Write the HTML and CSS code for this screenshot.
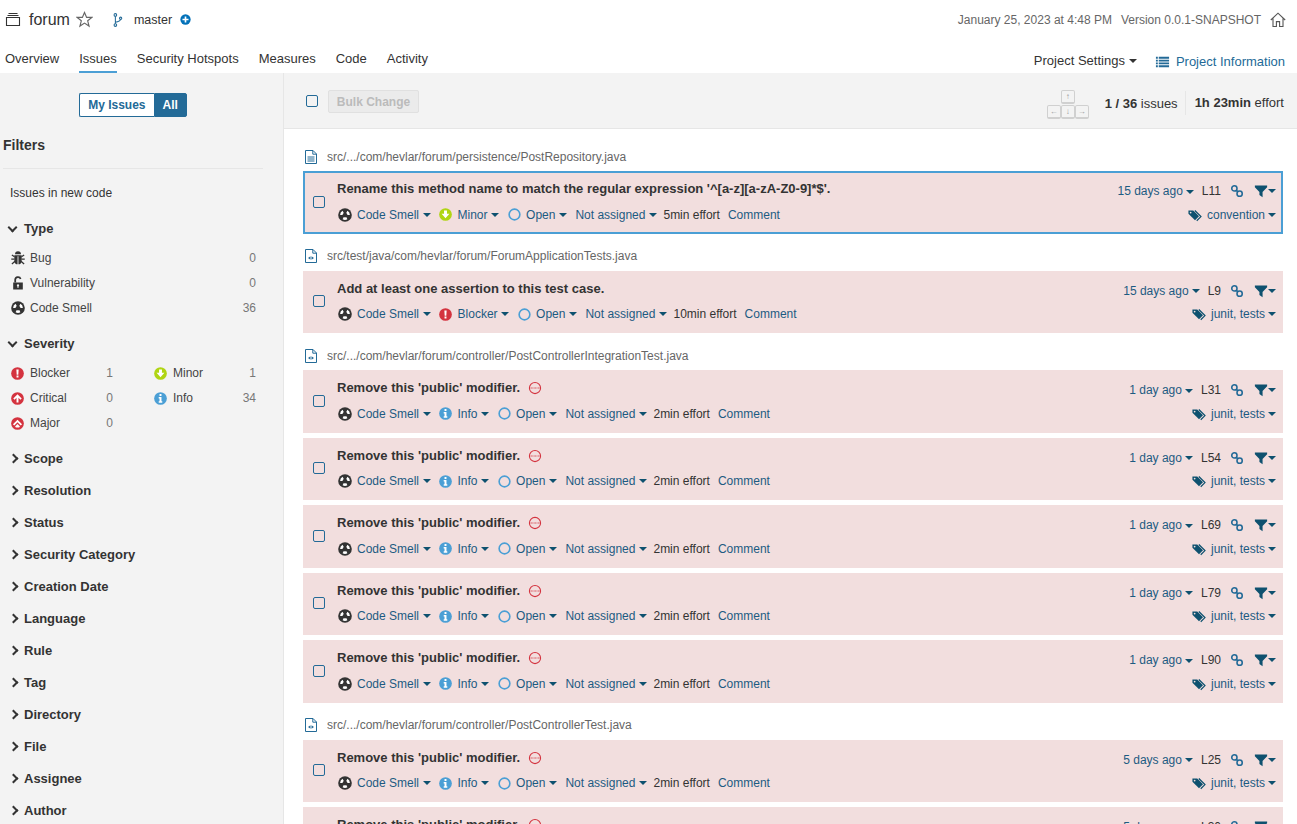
FILE: index.html
```html
<!DOCTYPE html>
<html lang="en">
<head>
    <meta charset="UTF-8">
    <meta name="viewport" content="width=device-width, initial-scale=1.0">
    <title>forum - Issues</title>
    <link rel="stylesheet" href="styles.css">
</head>
<body>
    <svg class="icon-defs" aria-hidden="true">
        <symbol id="i-smell" viewBox="0 0 16 16">
            <circle cx="8" cy="8" r="7.8" fill="#333"/>
            <path fill="#fff" d="M9.4 10.42L10.8 12.85A5.6 5.6 0 0 1 5.2 12.85L6.6 10.42A2.8 2.8 0 0 0 9.4 10.42ZM9.4 5.58L10.8 3.15A5.6 5.6 0 0 1 13.6 8L10.8 8A2.8 2.8 0 0 0 9.4 5.58ZM5.2 8L2.4 8A5.6 5.6 0 0 1 5.2 3.15L6.6 5.58A2.8 2.8 0 0 0 5.2 8Z"/>
        </symbol>
        <symbol id="i-bug" viewBox="0 0 16 16">
            <path fill="#333" d="M4.6 3.8A3.4 3.4 0 0 1 11.4 3.8ZM3.8 4.8H12.2V11A4.2 4.2 0 0 1 3.8 11ZM7.5 6V15H8.5V6Z" fill-rule="evenodd"/>
            <path fill="none" stroke="#333" stroke-width="1.5" d="M1 4.6L4 6.6M15 4.6L12 6.6M.3 9.3H4M15.7 9.3H12M1 14.8L4.6 11.8M15 14.8L11.4 11.8"/>
        </symbol>
        <symbol id="i-lock" viewBox="0 0 16 16">
            <path fill="#333" d="M2.5 7.4H13.5V15.5H2.5ZM8 9.4A1.3 1.3 0 0 0 7.3 11.8V13.4H8.7V11.8A1.3 1.3 0 0 0 8 9.4Z" fill-rule="evenodd"/>
            <path fill="none" stroke="#333" stroke-width="2" d="M4.8 7.5V4.2A3.2 3.2 0 0 1 11 3.4"/>
        </symbol>
        <symbol id="i-blocker" viewBox="0 0 16 16">
            <circle cx="8" cy="8" r="7.8" fill="#d4333f"/>
            <path fill="#fff" d="M6.6 3H9.4L9 9.6H7ZM6.8 10.6H9.2V13H6.8Z"/>
        </symbol>
        <symbol id="i-critical" viewBox="0 0 16 16">
            <circle cx="8" cy="8" r="7.8" fill="#d4333f"/>
            <path fill="#fff" d="M8 2.8L13.2 8L11.6 9.6L9.2 7.2V13H6.8V7.2L4.4 9.6L2.8 8Z"/>
        </symbol>
        <symbol id="i-major" viewBox="0 0 16 16">
            <circle cx="8" cy="8" r="7.8" fill="#d4333f"/>
            <path fill="#fff" d="M8 3.4L13.6 9L12 10.6L8 6.6L4 10.6L2.4 9ZM8 8.6L11 11.6L10 12.8H6L5 11.6Z"/>
        </symbol>
        <symbol id="i-minor" viewBox="0 0 16 16">
            <circle cx="8" cy="8" r="7.8" fill="#b0d513"/>
            <path fill="#fff" d="M6.2 3H9.8V7H12.8L8 12.6L3.2 7H6.2Z"/>
        </symbol>
        <symbol id="i-info" viewBox="0 0 16 16">
            <circle cx="8" cy="8" r="7.8" fill="#4b9fd5"/>
            <path fill="#fff" d="M6.8 2.6H9.2V4.9H6.8ZM5.8 6.2H9.2V11.4H10.2V13.2H5.8V11.4H6.8V8H5.8Z"/>
        </symbol>
        <symbol id="i-open" viewBox="0 0 16 16">
            <circle cx="8" cy="8" r="6.6" fill="none" stroke="#4b9fd5" stroke-width="2"/>
        </symbol>
        <symbol id="i-link" viewBox="0 0 16 16">
            <g fill="none" stroke="#236a97" stroke-width="1.8">
                <circle cx="5" cy="5" r="3"/>
                <circle cx="11" cy="11" r="3"/>
                <path d="M7 7L9 9"/>
            </g>
        </symbol>
        <symbol id="i-filter" viewBox="0 0 16 16">
            <path fill="#0e516f" d="M1 1.6H15V3.6L9.8 9V15.2L6.2 12.6V9L1 3.6Z"/>
        </symbol>
        <symbol id="i-tags" viewBox="0 0 16 16">
            <path fill="#0e516f" d="M.5 2.8H6L12.6 9.4L8 14L.5 6.6Z"/>
            <path fill="none" stroke="#0e516f" stroke-width="1.4" d="M7.8 2.8L14.8 9.8L10 14.6"/>
            <circle cx="3" cy="5.2" r="1" fill="#f2dede"/>
        </symbol>
        <symbol id="i-deprecated" viewBox="0 0 16 16">
            <circle cx="8" cy="8" r="6.4" fill="none" stroke="#d4333f" stroke-width="1.2"/>
            <path fill="none" stroke="#d4333f" stroke-width="1" stroke-dasharray="1 .6" d="M1.8 8H14.2"/>
        </symbol>
        <symbol id="i-file" viewBox="0 0 14 14">
            <path fill="none" stroke="#236a97" stroke-width="1" d="M1.5 .5H9L12.5 4V13.5H1.5ZM8.8 .5V4.2H12.5"/>
            <path fill="none" stroke="#236a97" stroke-width="1" d="M3.5 7H10.5M3.5 9H10.5M3.5 11H10.5"/>
        </symbol>
        <symbol id="i-test" viewBox="0 0 14 14">
            <path fill="none" stroke="#236a97" stroke-width="1" d="M1.5 .5H9L12.5 4V13.5H1.5ZM8.8 .5V4.2H12.5"/>
            <path fill="#236a97" d="M6.5 7.2V10.8L4 9ZM7.5 7.2V10.8L10 9Z"/>
        </symbol>
    </svg>

    <header class="topbar">
        <div class="project-row">
            <div class="project-left">
                <svg class="project-icon" viewBox="0 0 16 16"><path fill="none" stroke="#333" stroke-width="1.1" d="M1.5 5.5H14.5V13.5H1.5ZM2.5 3.5H13.5M3.5 1.5H12.5"/></svg>
                <span class="project-name">forum</span>
                <svg class="star-icon" viewBox="0 0 16 16"><path fill="none" stroke="#666" stroke-width="1.1" d="M8 1.4L10 6H14.9L11 9.2L12.3 14.2L8 11.4L3.7 14.2L5 9.2L1.1 6H6Z"/></svg>
                <svg class="branch-icon" viewBox="0 0 16 16"><g fill="none" stroke="#236a97" stroke-width="1.2"><circle cx="5" cy="2.2" r="1.5"/><circle cx="5" cy="13.8" r="1.5"/><circle cx="11" cy="6" r="1.3"/><path d="M5 3.7V12.3M5 10.5C8 10 10.6 9 11 7.3"/></g></svg>
                <span class="branch-name">master</span>
                <svg class="plus-icon" viewBox="0 0 16 16"><circle cx="8" cy="8" r="7.5" fill="#0271b9"/><path fill="#fff" d="M6.8 3.6H9.2V6.8H12.4V9.2H9.2V12.4H6.8V9.2H3.6V6.8H6.8Z"/></svg>
            </div>
            <div class="project-right">
                <span>January 25, 2023 at 4:48 PM</span>
                <span class="version">Version 0.0.1-SNAPSHOT</span>
                <svg class="home-icon" viewBox="0 0 16 16"><path fill="none" stroke="#555" stroke-width="1.1" d="M.8 8L8 1.2L15.2 8M3 6.4V14.5H6.4V9.6H9.6V14.5H13V6.4"/></svg>
            </div>
        </div>
        <div class="nav-row">
            <nav class="nav-tabs">
                <a>Overview</a>
                <a class="active">Issues</a>
                <a>Security Hotspots</a>
                <a>Measures</a>
                <a>Code</a>
                <a>Activity</a>
            </nav>
            <div class="nav-right">
                <span class="settings">Project Settings<i class="caret dark"></i></span>
                <span class="info-link">
                    <svg class="list-icon" viewBox="0 0 16 16"><path fill="#236a97" d="M1 3H3V5H1ZM4 3H15V5H4ZM1 6H3V8H1ZM4 6H15V8H4ZM1 9H3V11H1ZM4 9H15V11H4ZM1 12H3V14H1ZM4 12H15V14H4Z"/></svg>
                    Project Information
                </span>
            </div>
        </div>
    </header>

    <div class="layout">
        <aside class="sidebar">
            <div class="toggle">
                <span class="toggle-off">My Issues</span>
                <span class="toggle-on">All</span>
            </div>
            <h3 class="filters-title">Filters</h3>
            <div class="new-code">Issues in new code</div>

            <section class="facet open">
                <h4><i class="chevron down"></i>Type</h4>
                <div class="facet-row"><svg class="ic"><use href="#i-bug"/></svg><span class="facet-label">Bug</span><span class="count">0</span></div>
                <div class="facet-row"><svg class="ic"><use href="#i-lock"/></svg><span class="facet-label">Vulnerability</span><span class="count">0</span></div>
                <div class="facet-row"><svg class="ic"><use href="#i-smell"/></svg><span class="facet-label">Code Smell</span><span class="count">36</span></div>
            </section>

            <section class="facet open">
                <h4><i class="chevron down"></i>Severity</h4>
                <div class="severity-grid">
                    <div class="facet-row"><svg class="ic sev"><use href="#i-blocker"/></svg><span class="facet-label">Blocker</span><span class="count">1</span></div>
                    <div class="facet-row"><svg class="ic sev"><use href="#i-minor"/></svg><span class="facet-label">Minor</span><span class="count">1</span></div>
                    <div class="facet-row"><svg class="ic sev"><use href="#i-critical"/></svg><span class="facet-label">Critical</span><span class="count">0</span></div>
                    <div class="facet-row"><svg class="ic sev"><use href="#i-info"/></svg><span class="facet-label">Info</span><span class="count">34</span></div>
                    <div class="facet-row"><svg class="ic sev"><use href="#i-major"/></svg><span class="facet-label">Major</span><span class="count">0</span></div>
                </div>
            </section>

            <section class="facet"><h4><i class="chevron"></i>Scope</h4></section>
            <section class="facet"><h4><i class="chevron"></i>Resolution</h4></section>
            <section class="facet"><h4><i class="chevron"></i>Status</h4></section>
            <section class="facet"><h4><i class="chevron"></i>Security Category</h4></section>
            <section class="facet"><h4><i class="chevron"></i>Creation Date</h4></section>
            <section class="facet"><h4><i class="chevron"></i>Language</h4></section>
            <section class="facet"><h4><i class="chevron"></i>Rule</h4></section>
            <section class="facet"><h4><i class="chevron"></i>Tag</h4></section>
            <section class="facet"><h4><i class="chevron"></i>Directory</h4></section>
            <section class="facet"><h4><i class="chevron"></i>File</h4></section>
            <section class="facet"><h4><i class="chevron"></i>Assignee</h4></section>
            <section class="facet"><h4><i class="chevron"></i>Author</h4></section>
        </aside>

        <main class="content">
            <div class="toolbar">
                <span class="checkbox bar-check"></span>
                <button class="bulk">Bulk Change</button>
                <div class="toolbar-right">
                    <div class="keys">
                        <span class="key key-up">↑</span>
                        <span class="key key-left">←</span>
                        <span class="key">↓</span>
                        <span class="key">→</span>
                    </div>
                    <span class="total"><b>1 / 36</b> issues</span>
                    <span class="effort"><b>1h 23min</b> effort</span>
                </div>
            </div>

            <div class="issue-list">
                <div class="file-line"><svg class="ic"><use href="#i-file"/></svg>src/.../com/hevlar/forum/persistence/PostRepository.java</div>
                <article class="issue selected">
                    <span class="checkbox"></span>
                    <div class="issue-body">
                        <div class="issue-row">
                            <div class="issue-title">Rename this method name to match the regular expression '^[a-z][a-zA-Z0-9]*$'.</div>
                            <div class="issue-side"><span class="ago">15 days ago<i class="caret"></i></span><span class="line">L11</span><svg class="ic"><use href="#i-link"/></svg><span class="funnel"><svg class="ic"><use href="#i-filter"/></svg><i class="caret"></i></span></div>
                        </div>
                        <div class="issue-row">
                            <div class="issue-meta">
                                <span class="meta-item"><svg class="ic"><use href="#i-smell"/></svg>Code Smell<i class="caret"></i></span>
                                <span class="meta-item"><svg class="ic sev"><use href="#i-minor"/></svg>Minor<i class="caret"></i></span>
                                <span class="meta-item"><svg class="ic sev"><use href="#i-open"/></svg>Open<i class="caret"></i></span>
                                <span class="meta-item">Not assigned<i class="caret"></i></span>
                                <span class="effort-item">5min effort</span>
                                <span class="comment">Comment</span>
                            </div>
                            <div class="issue-tags"><svg class="ic"><use href="#i-tags"/></svg>convention<i class="caret"></i></div>
                        </div>
                    </div>
                </article>

                <div class="file-line"><svg class="ic"><use href="#i-test"/></svg>src/test/java/com/hevlar/forum/ForumApplicationTests.java</div>
                <article class="issue">
                    <span class="checkbox"></span>
                    <div class="issue-body">
                        <div class="issue-row">
                            <div class="issue-title">Add at least one assertion to this test case.</div>
                            <div class="issue-side"><span class="ago">15 days ago<i class="caret"></i></span><span class="line">L9</span><svg class="ic"><use href="#i-link"/></svg><span class="funnel"><svg class="ic"><use href="#i-filter"/></svg><i class="caret"></i></span></div>
                        </div>
                        <div class="issue-row">
                            <div class="issue-meta">
                                <span class="meta-item"><svg class="ic"><use href="#i-smell"/></svg>Code Smell<i class="caret"></i></span>
                                <span class="meta-item"><svg class="ic sev"><use href="#i-blocker"/></svg>Blocker<i class="caret"></i></span>
                                <span class="meta-item"><svg class="ic sev"><use href="#i-open"/></svg>Open<i class="caret"></i></span>
                                <span class="meta-item">Not assigned<i class="caret"></i></span>
                                <span class="effort-item">10min effort</span>
                                <span class="comment">Comment</span>
                            </div>
                            <div class="issue-tags"><svg class="ic"><use href="#i-tags"/></svg>junit, tests<i class="caret"></i></div>
                        </div>
                    </div>
                </article>

                <div class="file-line"><svg class="ic"><use href="#i-test"/></svg>src/.../com/hevlar/forum/controller/PostControllerIntegrationTest.java</div>
                <article class="issue">
                    <span class="checkbox"></span>
                    <div class="issue-body">
                        <div class="issue-row">
                            <div class="issue-title">Remove this 'public' modifier.<svg class="ic deprecated"><use href="#i-deprecated"/></svg></div>
                            <div class="issue-side"><span class="ago">1 day ago<i class="caret"></i></span><span class="line">L31</span><svg class="ic"><use href="#i-link"/></svg><span class="funnel"><svg class="ic"><use href="#i-filter"/></svg><i class="caret"></i></span></div>
                        </div>
                        <div class="issue-row">
                            <div class="issue-meta">
                                <span class="meta-item"><svg class="ic"><use href="#i-smell"/></svg>Code Smell<i class="caret"></i></span>
                                <span class="meta-item"><svg class="ic sev"><use href="#i-info"/></svg>Info<i class="caret"></i></span>
                                <span class="meta-item"><svg class="ic sev"><use href="#i-open"/></svg>Open<i class="caret"></i></span>
                                <span class="meta-item">Not assigned<i class="caret"></i></span>
                                <span class="effort-item">2min effort</span>
                                <span class="comment">Comment</span>
                            </div>
                            <div class="issue-tags"><svg class="ic"><use href="#i-tags"/></svg>junit, tests<i class="caret"></i></div>
                        </div>
                    </div>
                </article>
                <article class="issue">
                    <span class="checkbox"></span>
                    <div class="issue-body">
                        <div class="issue-row">
                            <div class="issue-title">Remove this 'public' modifier.<svg class="ic deprecated"><use href="#i-deprecated"/></svg></div>
                            <div class="issue-side"><span class="ago">1 day ago<i class="caret"></i></span><span class="line">L54</span><svg class="ic"><use href="#i-link"/></svg><span class="funnel"><svg class="ic"><use href="#i-filter"/></svg><i class="caret"></i></span></div>
                        </div>
                        <div class="issue-row">
                            <div class="issue-meta">
                                <span class="meta-item"><svg class="ic"><use href="#i-smell"/></svg>Code Smell<i class="caret"></i></span>
                                <span class="meta-item"><svg class="ic sev"><use href="#i-info"/></svg>Info<i class="caret"></i></span>
                                <span class="meta-item"><svg class="ic sev"><use href="#i-open"/></svg>Open<i class="caret"></i></span>
                                <span class="meta-item">Not assigned<i class="caret"></i></span>
                                <span class="effort-item">2min effort</span>
                                <span class="comment">Comment</span>
                            </div>
                            <div class="issue-tags"><svg class="ic"><use href="#i-tags"/></svg>junit, tests<i class="caret"></i></div>
                        </div>
                    </div>
                </article>
                <article class="issue">
                    <span class="checkbox"></span>
                    <div class="issue-body">
                        <div class="issue-row">
                            <div class="issue-title">Remove this 'public' modifier.<svg class="ic deprecated"><use href="#i-deprecated"/></svg></div>
                            <div class="issue-side"><span class="ago">1 day ago<i class="caret"></i></span><span class="line">L69</span><svg class="ic"><use href="#i-link"/></svg><span class="funnel"><svg class="ic"><use href="#i-filter"/></svg><i class="caret"></i></span></div>
                        </div>
                        <div class="issue-row">
                            <div class="issue-meta">
                                <span class="meta-item"><svg class="ic"><use href="#i-smell"/></svg>Code Smell<i class="caret"></i></span>
                                <span class="meta-item"><svg class="ic sev"><use href="#i-info"/></svg>Info<i class="caret"></i></span>
                                <span class="meta-item"><svg class="ic sev"><use href="#i-open"/></svg>Open<i class="caret"></i></span>
                                <span class="meta-item">Not assigned<i class="caret"></i></span>
                                <span class="effort-item">2min effort</span>
                                <span class="comment">Comment</span>
                            </div>
                            <div class="issue-tags"><svg class="ic"><use href="#i-tags"/></svg>junit, tests<i class="caret"></i></div>
                        </div>
                    </div>
                </article>
                <article class="issue">
                    <span class="checkbox"></span>
                    <div class="issue-body">
                        <div class="issue-row">
                            <div class="issue-title">Remove this 'public' modifier.<svg class="ic deprecated"><use href="#i-deprecated"/></svg></div>
                            <div class="issue-side"><span class="ago">1 day ago<i class="caret"></i></span><span class="line">L79</span><svg class="ic"><use href="#i-link"/></svg><span class="funnel"><svg class="ic"><use href="#i-filter"/></svg><i class="caret"></i></span></div>
                        </div>
                        <div class="issue-row">
                            <div class="issue-meta">
                                <span class="meta-item"><svg class="ic"><use href="#i-smell"/></svg>Code Smell<i class="caret"></i></span>
                                <span class="meta-item"><svg class="ic sev"><use href="#i-info"/></svg>Info<i class="caret"></i></span>
                                <span class="meta-item"><svg class="ic sev"><use href="#i-open"/></svg>Open<i class="caret"></i></span>
                                <span class="meta-item">Not assigned<i class="caret"></i></span>
                                <span class="effort-item">2min effort</span>
                                <span class="comment">Comment</span>
                            </div>
                            <div class="issue-tags"><svg class="ic"><use href="#i-tags"/></svg>junit, tests<i class="caret"></i></div>
                        </div>
                    </div>
                </article>
                <article class="issue">
                    <span class="checkbox"></span>
                    <div class="issue-body">
                        <div class="issue-row">
                            <div class="issue-title">Remove this 'public' modifier.<svg class="ic deprecated"><use href="#i-deprecated"/></svg></div>
                            <div class="issue-side"><span class="ago">1 day ago<i class="caret"></i></span><span class="line">L90</span><svg class="ic"><use href="#i-link"/></svg><span class="funnel"><svg class="ic"><use href="#i-filter"/></svg><i class="caret"></i></span></div>
                        </div>
                        <div class="issue-row">
                            <div class="issue-meta">
                                <span class="meta-item"><svg class="ic"><use href="#i-smell"/></svg>Code Smell<i class="caret"></i></span>
                                <span class="meta-item"><svg class="ic sev"><use href="#i-info"/></svg>Info<i class="caret"></i></span>
                                <span class="meta-item"><svg class="ic sev"><use href="#i-open"/></svg>Open<i class="caret"></i></span>
                                <span class="meta-item">Not assigned<i class="caret"></i></span>
                                <span class="effort-item">2min effort</span>
                                <span class="comment">Comment</span>
                            </div>
                            <div class="issue-tags"><svg class="ic"><use href="#i-tags"/></svg>junit, tests<i class="caret"></i></div>
                        </div>
                    </div>
                </article>

                <div class="file-line"><svg class="ic"><use href="#i-test"/></svg>src/.../com/hevlar/forum/controller/PostControllerTest.java</div>
                <article class="issue">
                    <span class="checkbox"></span>
                    <div class="issue-body">
                        <div class="issue-row">
                            <div class="issue-title">Remove this 'public' modifier.<svg class="ic deprecated"><use href="#i-deprecated"/></svg></div>
                            <div class="issue-side"><span class="ago">5 days ago<i class="caret"></i></span><span class="line">L25</span><svg class="ic"><use href="#i-link"/></svg><span class="funnel"><svg class="ic"><use href="#i-filter"/></svg><i class="caret"></i></span></div>
                        </div>
                        <div class="issue-row">
                            <div class="issue-meta">
                                <span class="meta-item"><svg class="ic"><use href="#i-smell"/></svg>Code Smell<i class="caret"></i></span>
                                <span class="meta-item"><svg class="ic sev"><use href="#i-info"/></svg>Info<i class="caret"></i></span>
                                <span class="meta-item"><svg class="ic sev"><use href="#i-open"/></svg>Open<i class="caret"></i></span>
                                <span class="meta-item">Not assigned<i class="caret"></i></span>
                                <span class="effort-item">2min effort</span>
                                <span class="comment">Comment</span>
                            </div>
                            <div class="issue-tags"><svg class="ic"><use href="#i-tags"/></svg>junit, tests<i class="caret"></i></div>
                        </div>
                    </div>
                </article>
                <article class="issue">
                    <span class="checkbox"></span>
                    <div class="issue-body">
                        <div class="issue-row">
                            <div class="issue-title">Remove this 'public' modifier.<svg class="ic deprecated"><use href="#i-deprecated"/></svg></div>
                            <div class="issue-side"><span class="ago">5 days ago<i class="caret"></i></span><span class="line">L30</span><svg class="ic"><use href="#i-link"/></svg><span class="funnel"><svg class="ic"><use href="#i-filter"/></svg><i class="caret"></i></span></div>
                        </div>
                        <div class="issue-row">
                            <div class="issue-meta">
                                <span class="meta-item"><svg class="ic"><use href="#i-smell"/></svg>Code Smell<i class="caret"></i></span>
                                <span class="meta-item"><svg class="ic sev"><use href="#i-info"/></svg>Info<i class="caret"></i></span>
                                <span class="meta-item"><svg class="ic sev"><use href="#i-open"/></svg>Open<i class="caret"></i></span>
                                <span class="meta-item">Not assigned<i class="caret"></i></span>
                                <span class="effort-item">2min effort</span>
                                <span class="comment">Comment</span>
                            </div>
                            <div class="issue-tags"><svg class="ic"><use href="#i-tags"/></svg>junit, tests<i class="caret"></i></div>
                        </div>
                    </div>
                </article>
            </div>
        </main>
    </div>
</body>
</html>
```

FILE: styles.css
```css
* {
    box-sizing: border-box;
}

html, body {
    height: 100%;
}

body {
    margin: 0;
    overflow: hidden;
    background: #fff;
    color: #333;
    font-family: "Liberation Sans", Arial, sans-serif;
    font-size: 12px;
}

.icon-defs {
    display: none;
}

.ic {
    width: 14px;
    height: 14px;
    flex: none;
}

.ic.sev {
    width: 13px;
    height: 13px;
    margin-right: 1px;
}

.caret {
    display: inline-block;
    width: 0;
    height: 0;
    margin-left: 4px;
    vertical-align: middle;
    border-left: 4px solid transparent;
    border-right: 4px solid transparent;
    border-top: 4px solid #0e516f;
}

.caret.dark {
    border-top-color: #333;
}

/* top bar */
.topbar {
    height: 73px;
    background: #fff;
}

.project-row {
    height: 40px;
    display: flex;
    align-items: center;
    justify-content: space-between;
    padding: 0 11px 1px 5px;
}

.project-left,
.project-right {
    display: flex;
    align-items: center;
}

.project-icon {
    width: 16px;
    height: 16px;
}

.project-name {
    margin-left: 8px;
    font-size: 16px;
}

.star-icon {
    width: 17px;
    height: 17px;
    margin-left: 6px;
}

.branch-icon {
    width: 14px;
    height: 16px;
    margin-left: 18px;
}

.branch-name {
    margin-left: 9px;
    font-size: 12.5px;
}

.plus-icon {
    width: 11px;
    height: 11px;
    margin-left: 8px;
}

.project-right {
    color: #666;
}

.version {
    margin-left: 9px;
}

.home-icon {
    width: 16px;
    height: 16px;
    margin-left: 9px;
}

.nav-row {
    height: 33px;
    display: flex;
    justify-content: space-between;
    padding: 0 12px 0 5px;
}

.nav-tabs {
    display: flex;
    gap: 20px;
}

.nav-tabs a {
    height: 33px;
    padding-top: 11px;
    font-size: 13px;
    color: #333;
}

.nav-tabs a.active {
    border-bottom: 2px solid #4b9fd5;
}

.nav-right {
    display: flex;
    align-items: center;
    font-size: 13px;
    padding-top: 7px;
}

.info-link {
    display: flex;
    align-items: center;
    margin-left: 18px;
    margin-top: 2px;
    color: #236a97;
}

.list-icon {
    width: 15px;
    height: 15px;
    margin-right: 6px;
}

/* sidebar */
.layout {
    display: flex;
    height: 751px;
}

.sidebar {
    width: 284px;
    flex: none;
    padding: 20px 20px 0 3px;
    background: #f3f3f3;
    border-right: 1px solid #e6e6e6;
    overflow: hidden;
}

.toggle {
    display: flex;
    justify-content: center;
    height: 24px;
    font-weight: bold;
    line-height: 22px;
}

.toggle-off {
    padding: 0 8px;
    color: #236a97;
    background: #fff;
    border: 1px solid #236a97;
    border-right: none;
    border-radius: 2px 0 0 2px;
}

.toggle-on {
    padding: 0 8px;
    color: #fff;
    background: #236a97;
    border: 1px solid #236a97;
    border-radius: 0 2px 2px 0;
}

.filters-title {
    margin: 20px 0 0;
    padding-bottom: 15px;
    font-size: 14px;
    line-height: 16px;
    border-bottom: 1px solid #e6e6e6;
}

.new-code {
    margin: 16px 0 0 7px;
    line-height: 16px;
}

.new-code + .facet {
    margin-top: 10px;
}

.facet h4 {
    margin: 0;
    display: flex;
    align-items: center;
    height: 32px;
    font-size: 13px;
}

.facet.open {
    padding-bottom: 6.5px;
}

.facet.open h4 {
    height: 34px;
}

.chevron {
    width: 7px;
    height: 7px;
    margin: 0 7px 0 7px;
    border-right: 2px solid #333;
    border-bottom: 2px solid #333;
    transform: rotate(-45deg);
}

.chevron.down {
    margin: -2px 8px 0 6px;
    transform: rotate(45deg);
}

.facet-row {
    display: flex;
    align-items: center;
    height: 25px;
    padding: 0 7px 0 8px;
    color: #444;
}

.facet-label {
    flex: 1;
    margin-left: 5px;
}

.count {
    color: #777;
}

.severity-grid {
    display: grid;
    grid-template-columns: 115px 115px;
    column-gap: 28px;
}

.severity-grid .facet-row {
    padding-right: 5px;
}

/* main column */
.content {
    flex: 1;
    min-width: 0;
}

.toolbar {
    height: 56px;
    display: flex;
    align-items: center;
    padding: 0 13px 0 22px;
    background: #f3f3f3;
    border-bottom: 1px solid #e6e6e6;
}

.checkbox {
    display: block;
    width: 12px;
    height: 12px;
    flex: none;
    border: 1px solid #236a97;
    border-radius: 2px;
}

.bar-check {
    margin-top: 1px;
}

.bulk {
    width: 91px;
    height: 23px;
    margin-left: 10px;
    margin-top: 2px;
    padding: 0;
    font: bold 12px "Liberation Sans", Arial, sans-serif;
    color: #bbb;
    background: #ebebeb;
    border: 1px solid #e0e0e0;
    border-radius: 2px;
}

.toolbar-right {
    display: flex;
    align-items: center;
    margin-left: auto;
    margin-top: 5px;
}

.keys {
    display: grid;
    grid-template-columns: repeat(3, 14px);
    gap: 1px 0;
    margin-right: 16px;
    margin-top: 3px;
}

.key {
    height: 14px;
    font-size: 8px;
    line-height: 11px;
    text-align: center;
    color: #999;
    background: #f3f3f3;
    border: 1px solid #d0d0d0;
    border-bottom-width: 2px;
    border-radius: 2px;
}

.key-up {
    grid-column: 2;
}

.key-left {
    grid-column: 1;
}

.total {
    padding-right: 7px;
    font-size: 13px;
}

.effort {
    padding-left: 9px;
    border-left: 1px solid #e6e6e6;
    font-size: 13px;
    line-height: 24px;
}

.issue-list {
    padding: 20px 14px 0 19px;
}

.file-line {
    display: flex;
    align-items: center;
    height: 17px;
    margin: 15px 0 5px;
    padding-bottom: 2px;
    color: #666;
}

.file-line:first-child {
    margin-top: 0;
}

.file-line .ic {
    margin-right: 9px;
    margin-left: 1px;
}

.issue {
    display: flex;
    align-items: center;
    height: 62.5px;
    margin-bottom: 5px;
    padding: 0 5px 1.5px 8px;
    background: #f2dede;
    border: 2px solid #f2dede;
}

.issue.selected {
    border-color: #4b9fd5;
}

.issue-body {
    flex: 1;
    min-width: 0;
    margin-left: 12px;
}

.issue-row {
    display: flex;
    justify-content: space-between;
    align-items: center;
    height: 16px;
}

.issue-row + .issue-row {
    margin-top: 10px;
}

.issue-title {
    display: flex;
    align-items: center;
    margin-top: 1px;
    font-size: 13px;
    font-weight: bold;
    line-height: 16px;
}

.deprecated {
    margin-left: 8px;
}

.issue-side {
    display: flex;
    align-items: center;
    margin-top: 5px;
    color: #1d5b82;
}

.ago .caret {
    margin-left: 3px;
}

.line {
    margin-left: 8px;
    margin-right: 9px;
    color: #333;
}

.funnel {
    display: flex;
    align-items: center;
    margin-left: 10px;
}

.funnel .caret {
    margin-left: 0;
}

.issue-meta {
    display: flex;
    align-items: center;
    margin-left: 1px;
}

.meta-item {
    display: flex;
    align-items: center;
    margin-right: 8.5px;
    color: #1d5b82;
}

.meta-item .caret {
    margin-left: 3.5px;
}

.meta-item .ic {
    margin-right: 5px;
}

.meta-item .ic.sev {
    margin-right: 5.5px;
}

.effort-item {
    margin-left: -2px;
    margin-right: 8px;
    color: #333;
}

.comment {
    color: #1d5b82;
}

.issue-tags {
    display: flex;
    align-items: center;
    color: #1d5b82;
}

.issue-tags .ic {
    margin-right: 5px;
}

.issue-tags .caret {
    margin-left: 3px;
}
```
